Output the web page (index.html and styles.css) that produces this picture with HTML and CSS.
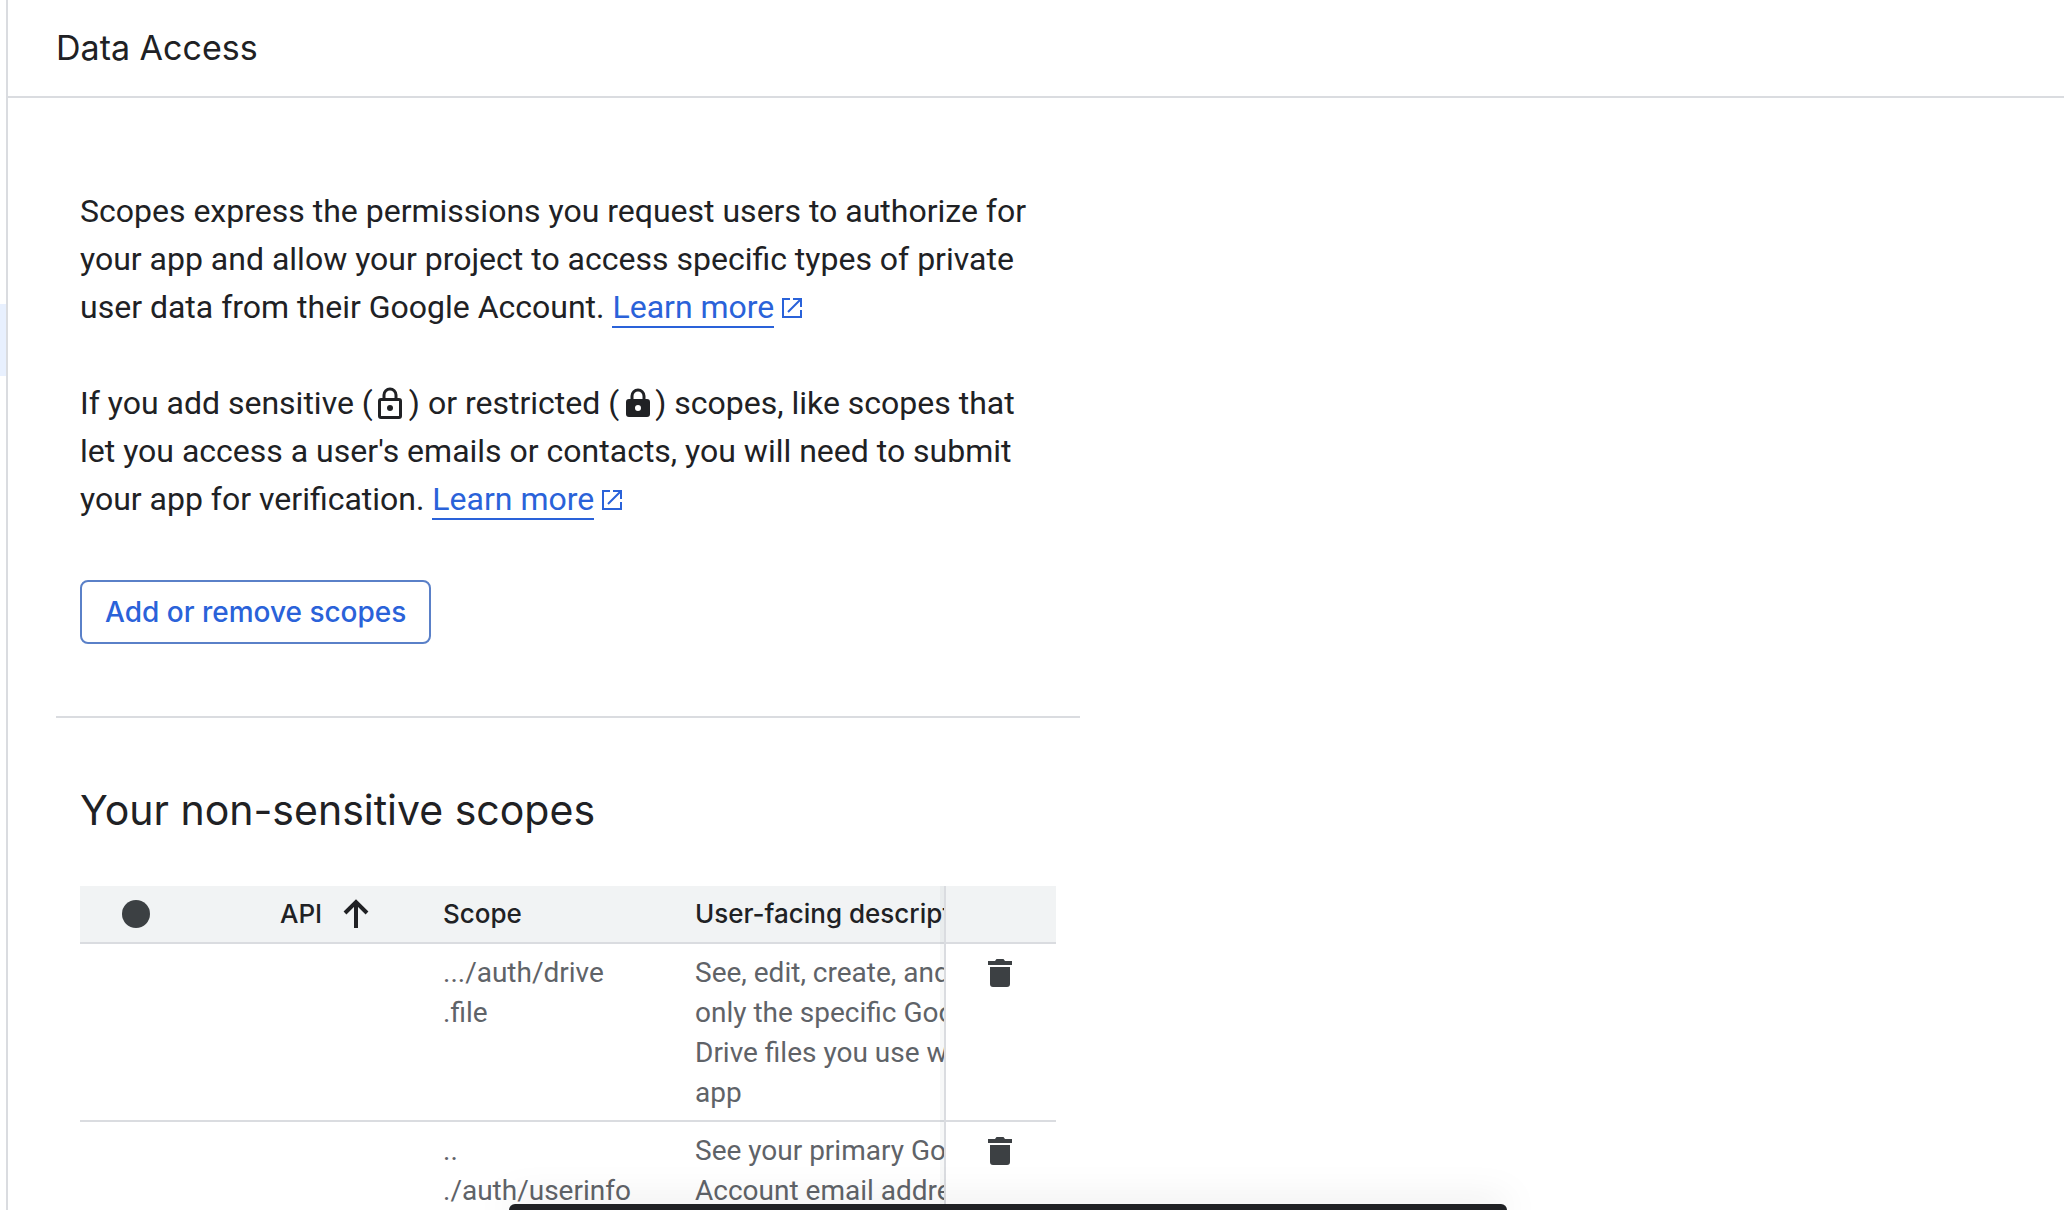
FILE: index.html
```html
<!DOCTYPE html>
<html lang="en">
<head>
    <meta charset="UTF-8">
    <meta name="viewport" content="width=device-width, initial-scale=1.0">
    <title>Data Access</title>
    <link rel="stylesheet" href="styles.css">
</head>
<body>
    <!-- edge of the side navigation -->
    <nav class="sidenav">
        <div class="sidenav-active"></div>
    </nav>

    <main class="page">
        <header class="page-header">
            <h1>Data Access</h1>
        </header>

        <div class="content">
            <section class="intro">
                <p>Scopes express the permissions you request users to authorize for your app and allow your project to access specific types of private user data from their Google Account. <a class="link" href="#">Learn more</a><svg class="external" viewBox="0 0 20 20"><path d="M8 1H1v18h18v-7M11 1h8v8M19 1L6 14"/></svg></p>

                <p>If you add sensitive (<svg class="lock" viewBox="0 0 32 32"><rect x="5.5" y="12.5" width="21" height="18" rx="1.5" fill="none" stroke="currentColor" stroke-width="3"/><path d="M10 12V8a6 6 0 0 1 12 0v4" fill="none" stroke="currentColor" stroke-width="3"/><circle cx="16" cy="21" r="3"/></svg>) or restricted (<svg class="lock" viewBox="0 0 32 32"><path fill-rule="evenodd" d="M9 12h18a3 3 0 0 1 3 3v12a3 3 0 0 1-3 3H9a3 3 0 0 1-3-3V15a3 3 0 0 1 3-3zM18 18a3 3 0 1 0 0 6a3 3 0 0 0 0-6z"/><path d="M12 13V9a6 6 0 0 1 12 0v4" fill="none" stroke="currentColor" stroke-width="3"/></svg>) scopes, like scopes that let you access a user's emails or contacts, you will need to submit your app for verification. <a class="link" href="#">Learn more</a><svg class="external" viewBox="0 0 20 20"><path d="M8 1H1v18h18v-7M11 1h8v8M19 1L6 14"/></svg></p>

                <button type="button" class="outline-button">Add or remove scopes</button>
            </section>

            <section class="scopes">
                <h2>Your non-sensitive scopes</h2>

                <div class="table-wrap">
                    <table>
                        <colgroup>
                            <col class="col-status">
                            <col class="col-api">
                            <col class="col-scope">
                            <col class="col-desc">
                            <col class="col-action">
                        </colgroup>
                        <thead>
                            <tr>
                                <th class="status"><span class="dot"></span></th>
                                <th>
                                    <span class="sort">API
                                        <svg class="icon" viewBox="0 0 32 32"><path d="M16 30V5M5 15L16 4l11 11" fill="none" stroke="currentColor" stroke-width="4"/></svg>
                                    </span>
                                </th>
                                <th>Scope</th>
                                <th>User-facing description</th>
                                <th class="action"></th>
                            </tr>
                        </thead>
                        <tbody>
                            <tr>
                                <td></td>
                                <td></td>
                                <td>.../auth/drive<br>.file</td>
                                <td>See, edit, create, and delete only the specific Google Drive files you use with this app</td>
                                <td class="action">
                                    <button type="button" class="icon-button" aria-label="Delete scope">
                                        <svg class="icon" viewBox="0 0 32 32"><path d="M4 4h7l1.500-2h7L21 4h7v4H4zM6 10h20v17a3 3 0 0 1-3 3H9a3 3 0 0 1-3-3z"/></svg>
                                    </button>
                                </td>
                            </tr>
                            <tr>
                                <td></td>
                                <td></td>
                                <td>..<br>./auth/userinfo<br>.email</td>
                                <td>See your primary Google Account email address</td>
                                <td class="action">
                                    <button type="button" class="icon-button" aria-label="Delete scope">
                                        <svg class="icon" viewBox="0 0 32 32"><path d="M4 4h7l1.500-2h7L21 4h7v4H4zM6 10h20v17a3 3 0 0 1-3 3H9a3 3 0 0 1-3-3z"/></svg>
                                    </button>
                                </td>
                            </tr>
                        </tbody>
                    </table>
                </div>
            </section>
        </div>
    </main>

    <!-- top edge of the snackbar -->
    <div class="snackbar"></div>
</body>
</html>
```

FILE: styles.css
```css
* {
    box-sizing: border-box;
}
body {
    display: flex;
    height: 100vh;
    margin: 0;
    overflow: hidden;
    background-color: #fff;
    color: #202124;
    font-family: Roboto, Arial, sans-serif;
}
h1, h2, p {
    margin: 0;
}
h1, h2, th, .outline-button {
    font-family: Inter, "Open Sans", sans-serif;
}
svg {
    fill: currentColor;
}
.sidenav {
    flex: none;
    width: 8px;
    padding-top: 304px;
    border-right: 2px solid #dadce0;
}
.sidenav-active {
    height: 72px;
    background-color: #e8f0fe;
}
.page {
    flex: 1;
    min-width: 0;
}
.page-header {
    padding: 24px 48px;
    border-bottom: 2px solid #dadce0;
}
h1 {
    font-size: 34px;
    font-weight: 400;
    line-height: 48px;
}
.content {
    max-width: 1120px;
    padding: 0 48px;
}
.intro {
    padding: 89px 24px 72px;
    border-bottom: 2px solid #dadce0;
}
.intro p {
    max-width: 960px;
    margin-bottom: 48px;
    font-size: 32px;
    line-height: 48px;
}
.link {
    border-bottom: 2px solid #2a62d9;
    color: #2a62d9;
    text-decoration: none;
}
.external {
    width: 20px;
    height: 20px;
    margin-left: 8px;
    fill: none;
    stroke: #2a62d9;
    stroke-width: 2;
}
.lock {
    width: 32px;
    height: 32px;
    margin: 0 3px 0 1px;
    vertical-align: -5px;
}
.outline-button {
    height: 64px;
    margin-top: 9px;
    padding: 0 23px;
    border: 2px solid #5a80c8;
    border-radius: 8px;
    background-color: #fff;
    color: #2a62d9;
    font-size: 28px;
    font-weight: 500;
    cursor: pointer;
}
.scopes {
    padding: 64px 24px 0;
}
h2 {
    margin-bottom: 48px;
    font-size: 41px;
    font-weight: 400;
    line-height: 56px;
}
.table-wrap {
    overflow: hidden;
}
table {
    width: 1092px;
    table-layout: fixed;
    border-spacing: 0;
}
.col-status {
    width: 184px;
}
.col-api {
    width: 163px;
}
.col-scope {
    width: 252px;
}
.col-action {
    width: 112px;
}
th, td {
    padding: 8px 16px;
    border-bottom: 2px solid #dadce0;
    font-size: 28px;
    line-height: 40px;
    text-align: left;
    vertical-align: top;
}
th {
    background-color: #f1f3f4;
    font-size: 26px;
    font-weight: 500;
}
td {
    padding: 9px 16px 7px;
    background-color: #fff;
    color: #5f6368;
}
.status {
    padding-left: 42px;
}
.dot {
    display: block;
    width: 28px;
    height: 28px;
    margin: 6px 0;
    border-radius: 50%;
    background-color: #3c4043;
}
.sort {
    display: flex;
    align-items: center;
    gap: 18px;
}
.icon {
    display: block;
    width: 32px;
    height: 32px;
}
/* delete column stays in view */
.action {
    position: sticky;
    right: 0;
    padding-right: 18px;
    border-left: 2px solid #dadce0;
    box-shadow: -4px 0 rgba(60, 64, 67, 0.04);
}
.icon-button {
    display: block;
    margin: 4px auto;
    padding: 0;
    border: 0;
    background: none;
    color: #3c4043;
    cursor: pointer;
}
.snackbar {
    position: fixed;
    bottom: 0;
    left: 509px;
    width: 998px;
    height: 6px;
    border-radius: 8px 8px 0 0;
    background-color: #202124;
    box-shadow: 0 0 36px rgba(0, 0, 0, 0.25);
}
```
